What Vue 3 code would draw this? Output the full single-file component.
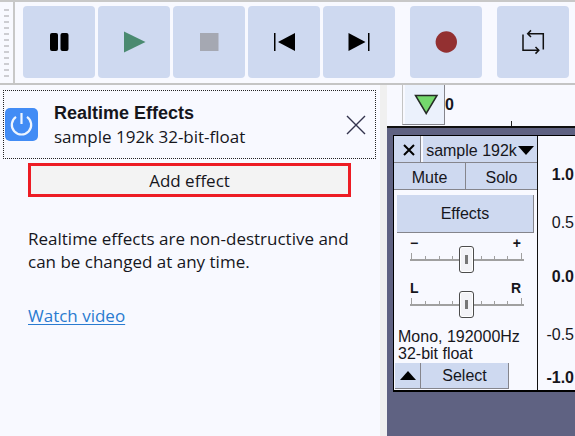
<script setup>
import { ref } from 'vue'

const gain = ref(0)
const pan = ref(0)
const ticks = [2, 16, 30, 43, 72, 85, 98, 112]
const levels = [
  { text: '1.0', strong: true },
  { text: '0.5', strong: false },
  { text: '0.0', strong: true },
  { text: '-0.5', strong: false },
  { text: '-1.0', strong: true },
]
</script>

<template>
  <div class="app">
    <header class="toolbar">
      <div class="grip"><i v-for="n in 12" :key="n"></i></div>
      <div class="transport">
        <button class="tool" aria-label="Pause">
          <svg width="72" height="72" viewBox="0 0 72 72">
            <rect x="27" y="27" width="8" height="18" rx="2" />
            <rect x="37.500" y="27" width="8" height="18" rx="2" />
          </svg>
        </button>
        <button class="tool" aria-label="Play">
          <svg width="72" height="72" viewBox="0 0 72 72">
            <path d="M26 25.500 L47.500 36 L26 46.500 Z" fill="#4a8a70" />
          </svg>
        </button>
        <button class="tool" aria-label="Stop">
          <svg width="72" height="72" viewBox="0 0 72 72">
            <rect x="27" y="27" width="18.500" height="18" fill="#a5a8b2" />
          </svg>
        </button>
        <button class="tool" aria-label="Skip to start">
          <svg width="72" height="72" viewBox="0 0 72 72">
            <rect x="26" y="27" width="1.500" height="18" />
            <path d="M47 27 V45 L30 36 Z" />
          </svg>
        </button>
        <button class="tool" aria-label="Skip to end">
          <svg width="72" height="72" viewBox="0 0 72 72">
            <path d="M25.500 27 V45 L42.500 36 Z" />
            <rect x="45" y="27" width="1.500" height="18" />
          </svg>
        </button>
        <button class="tool apart" aria-label="Record">
          <svg width="72" height="72" viewBox="0 0 72 72">
            <circle cx="36.300" cy="36" r="10.700" fill="#933031" />
          </svg>
        </button>
        <button class="tool apart" aria-label="Loop">
          <svg width="72" height="72" viewBox="0 0 72 72" fill="none" stroke="#111" stroke-width="1.500">
            <path d="M26 28.500 V44.300 H41.500 M38.500 41 L41.800 44.300 L38.500 47.600" />
            <path d="M46.300 43.500 V27.700 H31 M34 24.400 L30.700 27.700 L34 31" />
          </svg>
        </button>
      </div>
    </header>

    <main class="workspace">
      <section class="effects">
        <div class="effects-head">
          <button class="power" aria-label="Power">
            <svg width="33" height="33" viewBox="0 0 33 33" fill="none" stroke="#eef5ff" stroke-width="2.200">
              <path d="M11 8.800 A9.700 9.700 0 1 0 22 8.800" />
              <path d="M16.500 5 V16" />
            </svg>
          </button>
          <div class="titles">
            <h1>Realtime Effects</h1>
            <p>sample 192k 32-bit-float</p>
          </div>
          <button class="close" aria-label="Close">
            <svg width="20" height="20" viewBox="0 0 20 20" fill="none" stroke="#33334d" stroke-width="1.400">
              <path d="M1 1 L19 19 M19 1 L1 19" />
            </svg>
          </button>
        </div>
        <button class="add">Add effect</button>
        <p class="hint">Realtime effects are non-destructive and<br />can be changed at any time.</p>
        <a class="video" href="#video">Watch video</a>
      </section>

      <div class="splitter"></div>

      <section class="project">
        <div class="timeline">
          <button class="pin" aria-label="Playhead">
            <svg width="41" height="38" viewBox="0 0 41 38">
              <path d="M12.500 9.500 H34 L23.200 27.500 Z" fill="#74d86c" stroke="#252b25" stroke-width="1.500" />
            </svg>
          </button>
          <span class="time">0</span>
          <i class="mark"></i>
        </div>

        <div class="tracks">
          <article class="track">
            <div class="panel">
              <div class="row">
                <button class="cell small" aria-label="Remove track">
                  <svg width="14" height="14" viewBox="0 0 14 14" stroke="#000" stroke-width="2">
                    <path d="M2 2 L12 12 M12 2 L2 12" />
                  </svg>
                </button>
                <button class="cell name">
                  sample 192k
                  <svg width="16" height="9" viewBox="0 0 16 9"><path d="M0 0 H16 L8 9 Z" /></svg>
                </button>
              </div>
              <div class="row">
                <button class="cell">Mute</button>
                <button class="cell last">Solo</button>
              </div>
              <button class="fx">Effects</button>
              <div class="control">
                <div class="ends"><span>−</span><span>+</span></div>
                <div class="slider">
                  <svg width="114" height="28" viewBox="0 0 114 28">
                    <rect x="0" y="14" width="114" height="2" />
                    <rect v-for="(t, i) in ticks" :key="t" :x="t - 1" :y="i % 7 ? 11 : 8" width="1" :height="i % 7 ? 3 : 6" />
                  </svg>
                  <input v-model="gain" type="range" min="-36" max="36" aria-label="Gain" />
                </div>
              </div>
              <div class="control">
                <div class="ends"><span>L</span><span>R</span></div>
                <div class="slider">
                  <svg width="114" height="28" viewBox="0 0 114 28">
                    <rect x="0" y="14" width="114" height="2" />
                    <rect v-for="(t, i) in ticks" :key="t" :x="t - 1" :y="i % 7 ? 11 : 8" width="1" :height="i % 7 ? 3 : 6" />
                  </svg>
                  <input v-model="pan" type="range" min="-100" max="100" aria-label="Pan" />
                </div>
              </div>
              <p class="info">Mono, 192000Hz<br />32-bit float</p>
              <div class="foot">
                <button class="cell small" aria-label="Collapse">
                  <svg width="16" height="9" viewBox="0 0 16 9"><path d="M0 9 H16 L8 0 Z" /></svg>
                </button>
                <button class="cell select">Select</button>
              </div>
            </div>
            <div class="scale">
              <span v-for="l in levels" :key="l.text" :class="{ strong: l.strong }">{{ l.text }}</span>
            </div>
          </article>
        </div>
      </section>
    </main>
  </div>
</template>

<style>
body {
  margin: 0;
}
</style>

<style scoped>
.app {
  display: flex;
  flex-direction: column;
  min-height: 100vh;
  overflow: hidden;
  background: #f8f9ff;
  color: #16161c;
  font: 17px/23px "Open Sans", "Noto Sans", sans-serif;
}
h1,
p {
  margin: 0;
}
button {
  margin: 0;
  padding: 0;
  border: 0;
  border-radius: 0;
  background: #ced9f0;
  color: inherit;
  font: inherit;
}
svg {
  display: block;
}
.toolbar {
  display: flex;
  box-sizing: border-box;
  height: 85px;
  border-top: 2px solid #c8c8c8;
  border-bottom: 2px solid #c4c4c4;
}
.grip {
  display: flex;
  flex-direction: column;
  gap: 4px;
  box-sizing: border-box;
  width: 15px;
  padding: 7px 4px 0;
  border-right: 2px solid #c8c8c8;
}
.grip i {
  flex: none;
  height: 2px;
  background: #cdcdd2;
}
.transport {
  display: flex;
  gap: 3px;
  padding: 4px 0 0 8px;
}
.tool {
  flex: none;
  width: 72px;
  height: 72px;
  border-radius: 4px;
}
.apart {
  margin-left: 12px;
}
.workspace {
  display: grid;
  grid-template-columns: minmax(0, 1fr) 7px 188px;
  flex: 1;
}
.effects {
  display: flex;
  flex-direction: column;
  align-items: flex-start;
  padding: 5px 4px 0 3px;
}
.effects-head {
  display: flex;
  align-items: center;
  align-self: stretch;
  box-sizing: border-box;
  height: 69px;
  padding: 0 9px 0 1px;
  border: 1px dotted #222;
}
.power {
  width: 33px;
  height: 33px;
  border-radius: 5px;
  background: #428cf5;
}
.titles {
  flex: 1;
  padding-left: 16px;
}
h1 {
  font: bold 18px/24px "Liberation Sans", Arial, sans-serif;
}
.close {
  background: none;
}
.add {
  align-self: stretch;
  box-sizing: border-box;
  height: 34px;
  margin: 4px 25px 0;
  border: 3px solid #ed1c24;
  background: #f3f3f3;
}
.hint {
  padding: 30px 0 31px 25px;
  white-space: nowrap;
}
.video {
  margin-left: 25px;
  color: #2a7bd0;
  text-underline-offset: 2px;
}
.splitter {
  background: #f0f0f0;
}
.project {
  display: flex;
  flex-direction: column;
  min-width: 0;
}
.timeline {
  display: flex;
  align-items: flex-start;
  height: 41px;
  padding-left: 15px;
  border-bottom: 2px solid #111;
  font: bold 16px/40px "Liberation Sans", Arial, sans-serif;
}
.pin {
  box-sizing: border-box;
  width: 43px;
  height: 40px;
  border-left: 1px solid #c4c4c4;
  border-right: 1px solid #85858c;
  border-bottom: 1px solid #85858c;
  background: #ebf1fc;
  box-shadow: inset 2px 0 #f8f9ff;
}
.time {
  flex: none;
  width: 66px;
}
.mark {
  align-self: flex-end;
  width: 1px;
  height: 5px;
  background: #222;
}
.tracks {
  flex: 1;
  padding: 7px 0 0 6px;
  background: #5f6282;
  font: 16px/17px "Liberation Sans", Arial, sans-serif;
}
.track {
  display: flex;
  border: 1px solid #000;
  border-right: 0;
  border-bottom-width: 2px;
  background: #f8f9ff;
}
.panel {
  display: flex;
  flex: none;
  flex-direction: column;
  width: 143px;
  border-right: 1px solid #111;
}
.row {
  display: flex;
  height: 26px;
  border-bottom: 1px solid #85858c;
}
.cell {
  display: flex;
  flex: 1;
  align-items: center;
  justify-content: center;
  box-sizing: border-box;
  border-right: 1px solid #85858c;
}
.row .cell {
  padding-top: 2px;
}
.last {
  border-right: 0;
}
.row .small {
  flex: none;
  width: 27px;
  padding-left: 3px;
}
.name {
  gap: 1px;
  margin-left: 2px;
  border-right: 0;
  white-space: nowrap;
}
.fx {
  box-sizing: border-box;
  height: 38px;
  margin: 5px 3px 8px;
  border-right: 1px solid #85858c;
  border-bottom: 1px solid #85858c;
}
.control {
  display: flex;
  flex-direction: column;
  height: 45px;
  padding: 0 13px 0 16px;
}
.ends {
  display: flex;
  justify-content: space-between;
  height: 4px;
  padding-right: 3px;
  font-weight: bold;
  font-size: 14px;
  line-height: 4px;
}
.slider {
  display: grid;
}
.slider > * {
  grid-area: 1 / 1;
}
.slider svg {
  fill: #a0a0a0;
}
.slider input {
  width: 112px;
  height: 28px;
  margin: 0;
  appearance: none;
  background: none;
}
.slider input::-webkit-slider-thumb {
  appearance: none;
  box-sizing: border-box;
  width: 15px;
  height: 27px;
  border: 1px solid #4c4c4c;
  border-radius: 3px;
  background: linear-gradient(#777, #777) center / 3px 9px no-repeat, #f3f3f7;
  box-shadow: inset 0 0 0 1px #fff;
}
.info {
  margin-top: -3px;
  padding-left: 4px;
  white-space: nowrap;
}
.foot {
  display: flex;
  height: 26px;
  padding: 1px 0 1px 1px;
}
.foot .cell {
  border-bottom: 1px solid #85858c;
}
.foot .small {
  flex: none;
  width: 26px;
}
.foot .select {
  flex: none;
  width: 88px;
}
.scale {
  display: grid;
  grid-template-rows: 48px 54px 58px 43px 40px;
  padding: 15px 0 0 3px;
  height: 238px;
}
.scale span {
  width: 33px;
  line-height: 48px;
  text-align: right;
}
.strong {
  font-weight: bold;
}
</style>
